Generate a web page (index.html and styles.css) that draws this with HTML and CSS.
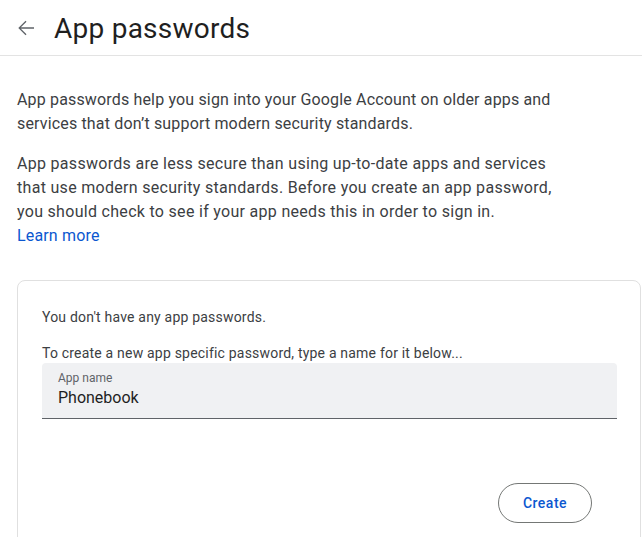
FILE: index.html
```html
<!DOCTYPE html>
<html lang="en">
<head>
<meta charset="utf-8">
<title>App passwords</title>
<link rel="stylesheet" href="styles.css">
</head>
<body>
<header class="topbar">
  <button class="back" aria-label="Back">
    <svg width="24" height="24" viewBox="0 0 24 24" aria-hidden="true"><path d="M20 11.25H6.9l5.6-5.6-.95-.9L4.3 12l7.25 7.25.95-.9-5.6-5.6H20z" fill="#5f6368"/></svg>
  </button>
  <h1 class="title">App passwords</h1>
</header>
<main class="content">
  <p class="intro">App passwords help you sign into your Google Account on older apps and services that don’t support modern security standards.</p>
  <p class="intro intro-wide">App passwords are less secure than using up-to-date apps and services that use modern security standards. Before you create an app password, you should check to see if your app needs this in order to sign in.<br><a class="link" href="#">Learn more</a></p>
  <section class="card">
    <p class="note">You don't have any app passwords.</p>
    <p class="note hint">To create a new app specific password, type a name for it below...</p>
    <label class="field">
      <span class="field-label">App name</span>
      <span class="field-value">Phonebook</span>
    </label>
    <div class="actions">
      <button class="create">Create</button>
    </div>
  </section>
</main>
</body>
</html>
```

FILE: styles.css
```css
html, body {
  margin: 0;
  padding: 0;
  background: #ffffff;
  font-family: Roboto, "Liberation Sans", Arial, sans-serif;
  overflow: hidden;
}

.topbar {
  display: flex;
  align-items: center;
  height: 55px;
  border-bottom: 1px solid #e3e3e3;
  padding-left: 14px;
  gap: 16px;
}

.back {
  display: flex;
  width: 24px;
  height: 24px;
  padding: 0;
  margin: 0;
  border: 0;
  background: none;
}

.title {
  margin: 2px 0 0;
  font-size: 28px;
  font-weight: 400;
  color: #1f1f1f;
  line-height: 36px;
  letter-spacing: 0.25px;
}

.content {
  padding: 32px 1px 0 17px;
}

.intro {
  margin: 0 0 16px;
  width: 555px;
  font-size: 16px;
  line-height: 24px;
  color: #3c4043;
  letter-spacing: 0.16px;
}

.intro-wide {
  width: 552px;
  letter-spacing: 0.3px;
}

.link {
  color: #0b57d0;
  text-decoration: none;
  letter-spacing: 0.16px;
}

.card {
  margin-top: 32px;
  border: 1px solid #e0e0e0;
  border-radius: 8px;
  padding: 26px 23px 40px 24px;
}

.note {
  margin: 0;
  font-size: 14px;
  line-height: 20px;
  color: #3c4043;
  letter-spacing: 0.2px;
}

.hint {
  margin-top: 16px;
}

.field {
  display: flex;
  flex-direction: column;
  background: #f0f1f3;
  border-radius: 4px 4px 0 0;
  border-bottom: 1px solid #5f6368;
  box-sizing: border-box;
  height: 56px;
  padding: 7px 16px 0;
}

.field-label {
  font-size: 12px;
  line-height: 16px;
  color: #5f6368;
}

.field-value {
  font-size: 16px;
  line-height: 24px;
  color: #1f1f1f;
}

.actions {
  display: flex;
  justify-content: flex-end;
  margin-top: 64px;
  padding-right: 25px;
}

.create {
  width: 94px;
  height: 40px;
  padding: 0;
  border: 1px solid #747775;
  border-radius: 20px;
  background: #ffffff;
  color: #0b57d0;
  font-family: Roboto, "Liberation Sans", Arial, sans-serif;
  font-size: 14px;
  font-weight: 500;
  letter-spacing: 0.5px;
}
```
